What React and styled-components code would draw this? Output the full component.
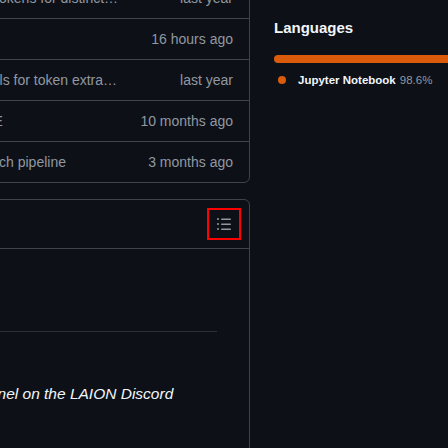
import React from "react";
import styled, { createGlobalStyle } from "styled-components";

const GlobalStyle = createGlobalStyle`
  html, body {
    margin: 0;
    padding: 0;
    background: #0d1117;
    overflow: hidden;
    font-family: "Liberation Sans", Arial, sans-serif;
    color: #f0f6fc;
  }
`;

const Page = styled.div`
  display: flex;
  align-items: flex-start;
  gap: 24px;
  margin-left: -300px;
  width: max-content;
`;

const Main = styled.div`
  width: 550px;
  flex-shrink: 0;
  margin-top: -23px;
  display: flex;
  flex-direction: column;
  gap: 16px;
`;

const Box = styled.div`
  border: 1px solid #3d444d;
  border-radius: 6px;
  overflow: hidden;
`;

const FileRow = styled.div`
  display: grid;
  grid-template-columns: 210px 1fr 98px;
  column-gap: 16px;
  align-items: center;
  height: 40px;
  padding: 0 16px;
  font-size: 14px;
  line-height: 20px;
  & + & {
    border-top: 1px solid #3d444d;
  }
`;

const FileName = styled.span`
  color: #f0f6fc;
  white-space: nowrap;
  overflow: hidden;
`;

const Message = styled.span`
  color: #9198a1;
  white-space: nowrap;
  overflow: hidden;
  text-overflow: ellipsis;
`;

const Age = styled.span`
  color: #9198a1;
  white-space: nowrap;
  text-align: right;
`;

const ReadmeHeader = styled.div`
  display: flex;
  justify-content: flex-end;
  padding: 8px;
  border-bottom: 1px solid #3d444d;
`;

const OutlineButton = styled.button`
  box-sizing: border-box;
  width: 34px;
  height: 32px;
  padding: 0;
  border: 2px solid #ff0000;
  background: transparent;
  color: #9198a1;
  display: flex;
  align-items: center;
  justify-content: center;
`;

const ReadmeBody = styled.article`
  padding: 32px 32px 96px;
`;

const Heading = styled.h2`
  margin: 13px 0 50px;
  padding-bottom: 7px;
  font-size: 24px;
  line-height: 30px;
  font-weight: 700;
  color: #f0f6fc;
  border-bottom: 1px solid #2b3139;
`;

const Note = styled.p`
  margin: 0;
  font-size: 15.5px;
  line-height: 24px;
  font-style: italic;
  color: #f0f6fc;
  white-space: nowrap;
`;

const Sidebar = styled.aside`
  width: 296px;
  flex-shrink: 0;
  padding-top: 16px;
`;

const SideTitle = styled.h2`
  margin: 0 0 15px;
  font-size: 15px;
  line-height: 24px;
  font-weight: 700;
  color: #f0f6fc;
`;

const LangBar = styled.div`
  height: 8px;
  border-radius: 6px;
  background: #da5b0b;
`;

const LangList = styled.ul`
  list-style: none;
  margin: 8px 0 0;
  padding: 0;
`;

const LangItem = styled.li`
  display: flex;
  align-items: center;
  font-size: 11.5px;
  line-height: 18px;
`;

const LangName = styled.span`
  margin-left: 8px;
  font-weight: 700;
  color: #f0f6fc;
`;

const LangPct = styled.span`
  margin-left: 4px;
  color: #9198a1;
`;

const ListIcon = () => (
  <svg width="16" height="16" viewBox="0 0 16 16" fill="currentColor" aria-hidden="true">
    <path d="M5.75 2.5h8.5a.75.75 0 0 1 0 1.5h-8.5a.75.75 0 0 1 0-1.5Zm0 5h8.5a.75.75 0 0 1 0 1.5h-8.5a.75.75 0 0 1 0-1.5Zm0 5h8.5a.75.75 0 0 1 0 1.5h-8.5a.75.75 0 0 1 0-1.5ZM2 14a1 1 0 1 1 0-2 1 1 0 0 1 0 2Zm1-6a1 1 0 1 1-2 0 1 1 0 0 1 2 0ZM2 4a1 1 0 1 1 0-2 1 1 0 0 1 0 2Z" />
  </svg>
);

const Dot = ({ color }) => (
  <svg width="16" height="16" viewBox="0 0 16 16" aria-hidden="true">
    <circle cx="8" cy="8" r="4" fill={color} />
  </svg>
);

const files = [
  { name: "tokenizer", message: "Add the tokens for distinct speakers", age: "last year" },
  { name: "notebooks", message: "Update", age: "16 hours ago" },
  { name: "utils", message: "Wrap tools for token extraction", age: "last year" },
  { name: "LICENSE", message: "README", age: "10 months ago" },
  { name: "README.md", message: "Add search pipeline", age: "3 months ago" },
];

export default function App() {
  return (
    <>
      <GlobalStyle />
      <Page>
        <Main>
          <Box>
            {files.map((f) => (
              <FileRow key={f.name}>
                <FileName>{f.name}</FileName>
                <Message>{f.message}</Message>
                <Age>{f.age}</Age>
              </FileRow>
            ))}
          </Box>
          <Box>
            <ReadmeHeader>
              <OutlineButton aria-label="Outline">
                <ListIcon />
              </OutlineButton>
            </ReadmeHeader>
            <ReadmeBody>
              <Heading>Contact</Heading>
              <Note>Come join the #speech-tokenizer channel on the LAION Discord</Note>
            </ReadmeBody>
          </Box>
        </Main>
        <Sidebar>
          <SideTitle>Languages</SideTitle>
          <LangBar />
          <LangList>
            <LangItem>
              <Dot color="#da5b0b" />
              <LangName>Jupyter Notebook</LangName>
              <LangPct>98.6%</LangPct>
            </LangItem>
          </LangList>
        </Sidebar>
      </Page>
    </>
  );
}
